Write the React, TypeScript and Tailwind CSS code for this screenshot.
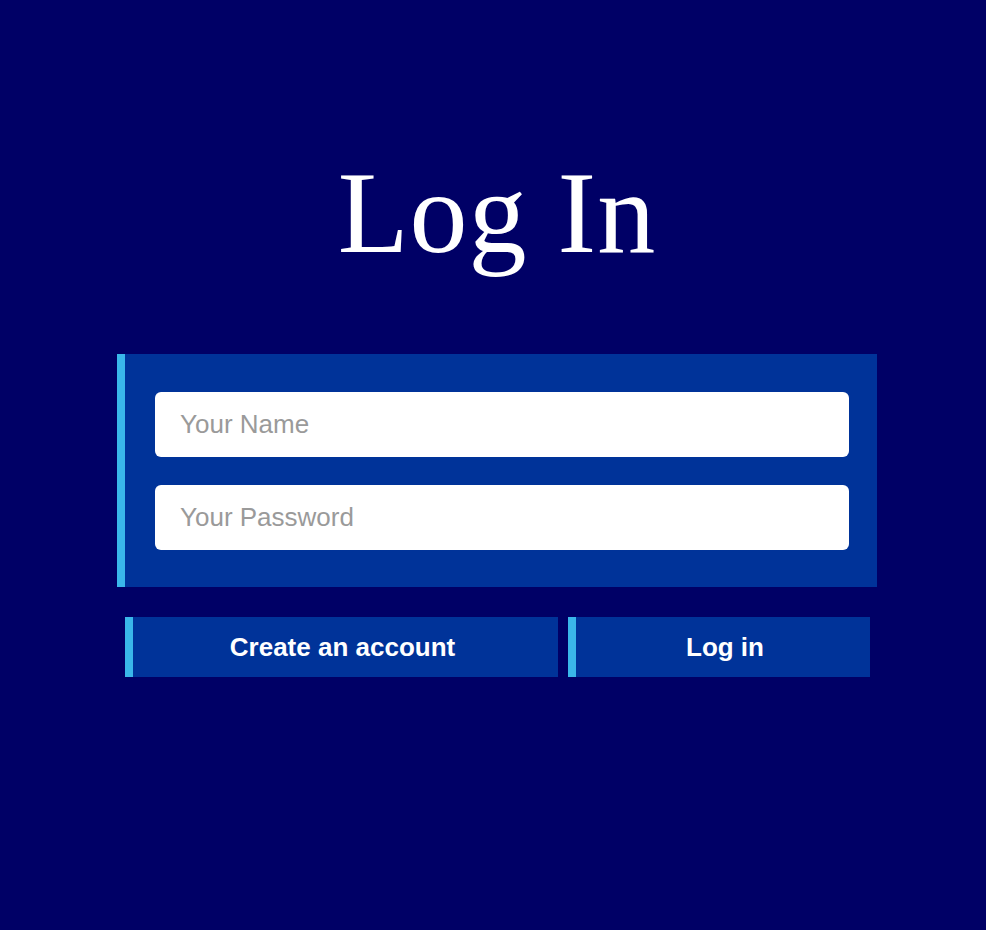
import React from "react";

export default function App() {
  return (
    <div className="min-h-[930px] w-full bg-[#000066]" style={{ fontFamily: '"Liberation Sans", Arial, sans-serif' }}>
      <div className="ml-[117px] w-[760px] pt-[155px]">
        <h1
          className="text-center text-[116px] leading-none tracking-[1px] text-white"
          style={{ fontFamily: '"Liberation Serif", "Times New Roman", serif' }}
        >
          Log In
        </h1>
        <div className="mt-[83px] flex flex-col gap-[28px] border-l-[8px] border-[#3ab7ea] bg-[#003399] pb-[37px] pl-[30px] pr-[28px] pt-[38px]">
          <input
            type="text"
            placeholder="Your Name"
            className="h-[65px] w-full rounded-[6px] bg-white pl-[25px] text-[26px] text-gray-700 outline-none placeholder:text-[#9a9a9a]"
          />
          <input
            type="password"
            placeholder="Your Password"
            className="h-[65px] w-full rounded-[6px] bg-white pl-[25px] text-[26px] text-gray-700 outline-none placeholder:text-[#9a9a9a]"
          />
        </div>
        <div className="mt-[30px] flex gap-[10px] pl-[8px]">
          <button className="flex h-[60px] w-[433px] items-center justify-center border-l-[8px] border-[#3ab7ea] bg-[#003399] pr-[6px] text-[26px] font-bold text-white">
            Create an account
          </button>
          <button className="flex h-[60px] w-[302px] items-center justify-center border-l-[8px] border-[#3ab7ea] bg-[#003399] pl-[4px] text-[26px] font-bold text-white">
            Log in
          </button>
        </div>
      </div>
    </div>
  );
}
